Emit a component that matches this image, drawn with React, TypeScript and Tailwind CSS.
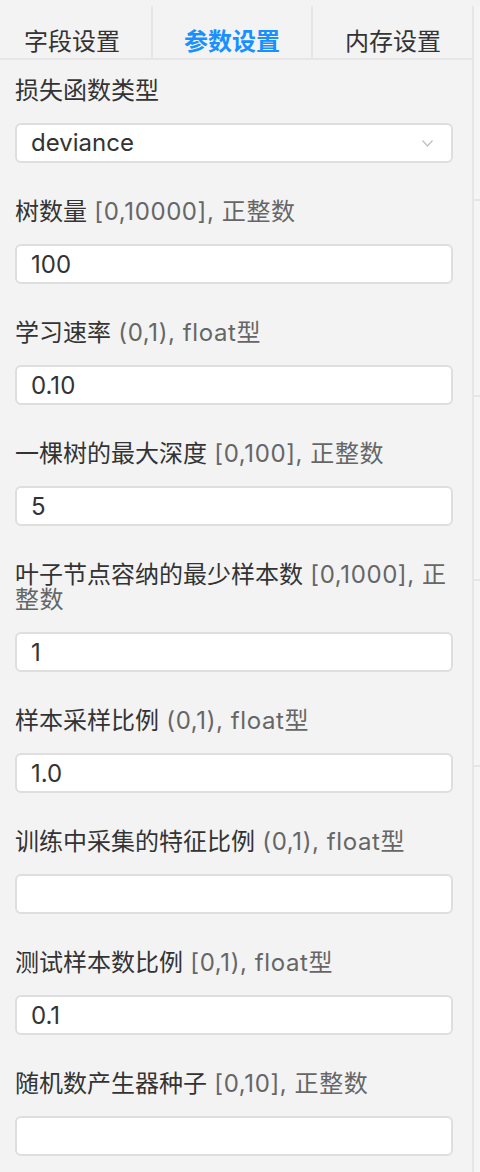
import { ChangeEvent, useState } from 'react';

type Field = {
  label: string;
  hint?: string;
  value: string;
};

const fields: Field[] = [
  { label: '树数量', hint: '[0,10000], 正整数', value: '100' },
  { label: '学习速率', hint: '(0,1), float型', value: '0.10' },
  { label: '一棵树的最大深度', hint: '[0,100], 正整数', value: '5' },
  { label: '叶子节点容纳的最少样本数', hint: '[0,1000], 正整数', value: '1' },
  { label: '样本采样比例', hint: '(0,1), float型', value: '1.0' },
  { label: '训练中采集的特征比例', hint: '(0,1), float型', value: '' },
  { label: '测试样本数比例', hint: '[0,1), float型', value: '0.1' },
  { label: '随机数产生器种子', hint: '[0,10], 正整数', value: '' },
];

const tabs = ['字段设置', '参数设置', '内存设置'];

const fontStack = "font-['Inter','Noto_Sans_CJK_SC',sans-serif]";

const FieldLabel = ({ label, hint }: { label: string; hint?: string }) => (
  <div className="text-[24px] leading-[25px] text-[#333]">
    {label}
    {hint && <span className="text-[#666] tracking-[0.6px]"> {hint}</span>}
  </div>
);

const App = () => {
  const [activeTab, setActiveTab] = useState(1);
  const [values, setValues] = useState(fields.map((f) => f.value));

  const onChange = (i: number) => (e: ChangeEvent<HTMLInputElement>) => {
    const next = [...values];
    next[i] = e.target.value;
    setValues(next);
  };

  return (
    <div className={`flex w-[480px] min-h-[1172px] bg-[#f3f3f3] overflow-hidden ${fontStack}`}>
      <div className="w-[472px] shrink-0">
        {/* tabs */}
        <div className="flex h-[60px] border-b-2 border-[#e6e6e6] ml-[-7px]">
          {tabs.map((t, i) => (
            <button
              key={t}
              onClick={() => setActiveTab(i)}
              className={`mt-[6px] w-[160px] shrink-0 flex items-end justify-center pb-[2px] text-[24px] leading-[28px] ${
                i < tabs.length - 1 ? 'border-r-2 border-[#e6e6e6]' : ''
              } ${i === activeTab ? 'text-[#1890ff] font-semibold' : 'text-[#333]'}`}
            >
              {t}
            </button>
          ))}
        </div>

        <div className="pl-[15px] pr-[19px] pt-[18px] pb-[20px]">
          <FieldLabel label="损失函数类型" />
          <div className="mt-[20px] flex items-center justify-between h-[40px] bg-white border-2 border-[#dedede] rounded-[6px] pl-[14px] pr-[18px] text-[24px] text-[#333]">
            <span>deviance</span>
            <svg width="11" height="7" viewBox="0 0 11 7" fill="none">
              <path d="M0.5 0.5 L5.5 6 L10.5 0.5" stroke="#bfbfbf" strokeWidth="1.2" />
            </svg>
          </div>

          {fields.map((f, i) => (
            <div key={f.label} className="mt-[36px]">
              <FieldLabel label={f.label} hint={f.hint} />
              <input
                value={values[i]}
                onChange={onChange(i)}
                className="mt-[20px] block w-full h-[40px] bg-white border-2 border-[#dedede] rounded-[6px] px-[14px] text-[24px] text-[#333] outline-none"
              />
            </div>
          ))}
        </div>
      </div>

      {/* edge of the panel behind */}
      <div className="flex-1 mt-[6px] border-l-2 border-[#e6e6e6] bg-[#f5f5f5] flex flex-col">
        <div className="h-[195px] border-b-2 border-[#e6e6e6]" />
        <div className="h-[196px] border-b-2 border-[#e6e6e6]" />
        <div className="h-[184px] border-b-2 border-[#e6e6e6]" />
        <div className="h-[186px] border-b-2 border-[#e6e6e6]" />
      </div>
    </div>
  );
};

export default App;
